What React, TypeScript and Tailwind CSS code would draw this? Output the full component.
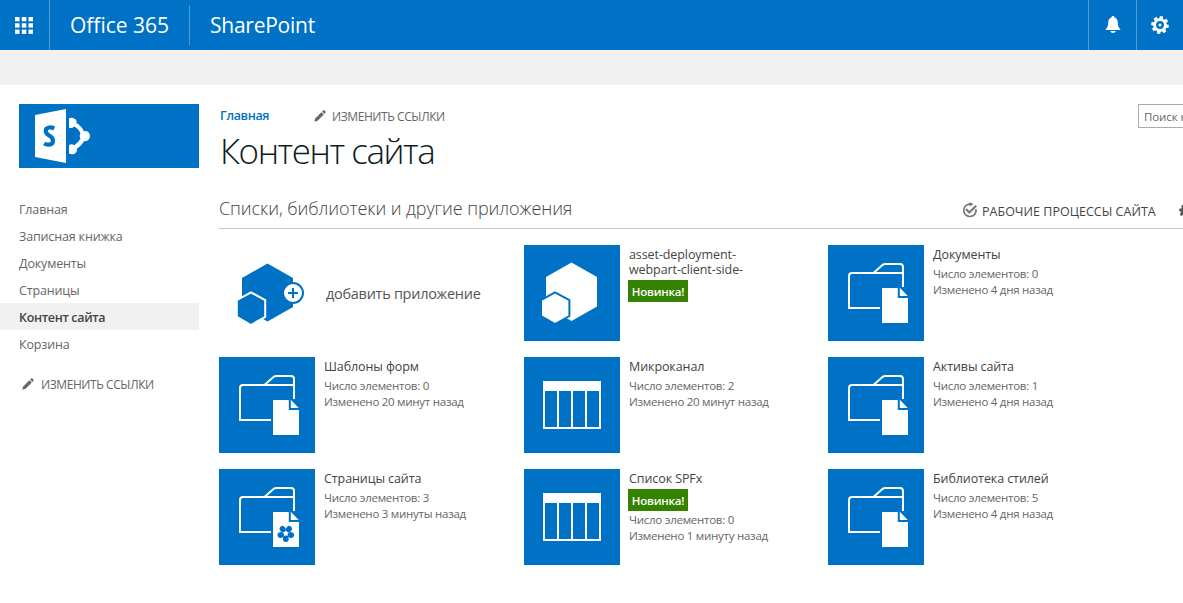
import React from "react";

function Pencil({ className = "" }: { className?: string }) {
  return (
    <svg className={`h-3 w-3 shrink-0 ${className}`} viewBox="0 0 12 12" fill="#666">
      <path d="M0.2 11.8 L1.2 8.4 L7.4 2.2 L9.8 4.6 L3.6 10.8 Z" />
      <path d="M8.1 1.5 L9.2 0.5 Q10 0 10.8 0.7 L11.4 1.3 Q12 2.1 11.4 2.8 L10.5 3.9 Z" />
    </svg>
  );
}

function Gear({ className = "", color }: { className?: string; color: string }) {
  const teeth = [0, 45, 90, 135, 180, 225, 270, 315];
  return (
    <svg className={`shrink-0 ${className}`} viewBox="0 0 18 18">
      <g fill={color}>
        {teeth.map((a) => (
          <path key={a} d="M7 4 L7.4 0.2 H10.6 L11 4 Z" transform={`rotate(${a + 10} 9 9)`} />
        ))}
      </g>
      <circle cx="9" cy="9" r="5.4" fill="none" stroke={color} strokeWidth="2.9" />
      <circle cx="9" cy="9" r="1.5" fill={color} />
    </svg>
  );
}

function Waffle() {
  return (
    <svg className="h-[17px] w-[18px]" viewBox="0 0 18 17" fill="#fff">
      {[0, 6.3, 12.6].map((y) =>
        [0, 6.8, 13.5].map((x) => <rect key={`${x}-${y}`} x={x} y={y} width="4.5" height="4.3" />),
      )}
    </svg>
  );
}

function Bell() {
  return (
    <svg className="h-[18px] w-4" viewBox="0 0 16 18" fill="#fff">
      <path d="M8 0 C9 0 9.5 0.6 9.6 1.5 C12 2.3 12.7 4.2 12.8 6.6 C12.9 10 13.2 11.3 15.3 13.2 V14 H0.7 V13.2 C2.8 11.3 3.1 10 3.2 6.6 C3.3 4.2 4 2.3 6.4 1.5 C6.5 0.6 7 0 8 0 Z" />
      <path d="M5.2 15 H10.8 Q10 17 8 17 Q6 17 5.2 15 Z" />
    </svg>
  );
}

function Logo() {
  return (
    <svg className="h-16 w-[180px]" viewBox="0 0 180 64">
      <rect width="180" height="64" fill="#0072c6" />
      <path d="M16 11 L47 5 V59 L16 53 Z" fill="#fff" />
      <path
        d="M35.2 24.6 Q32.8 23.2 30.2 23.5 Q26.6 24 26.7 27.1 Q26.8 29.3 29.8 31.2 Q34 33.6 34 36.8 Q33.8 40.6 29.3 40.7 Q27 40.7 25.2 39.4"
        fill="none"
        stroke="#0072c6"
        strokeWidth="4.2"
      />
      <path d="M50 14.2 Q54 12.8 56.7 15.6 Q58 17.4 57.6 19.2 Q63 22 64.8 27.2 Q68.5 26.3 70.4 29.4 L71 32 L70.4 34.6 Q68.5 37.7 65.2 37 Q63 41.5 58 44.8 Q58.2 48.5 55.5 49.7 Q53 50.8 50 49.6 V41.2 Q52.5 39.5 55.2 41.2 Q59.5 38.5 61.4 34.8 Q59.8 32 61.4 29.2 Q59.5 24.4 55.3 22.4 Q53 24.8 50 23.8 Z" fill="#fff" />
    </svg>
  );
}

function AddAppIcon() {
  return (
    <svg className="h-24 w-24 shrink-0" viewBox="0 0 96 96">
      <path d="M48.5 18.5 L74 33 V62 L48.5 76.5 L23 62 V33 Z" fill="#0072c6" />
      <path d="M32 47.4 L46.2 55 V71.8 L32 80 L17.8 71.8 V55 Z" fill="#0072c6" stroke="#fff" strokeWidth="2" />
      <circle cx="74" cy="48" r="10" fill="#fff" stroke="#0072c6" strokeWidth="2" />
      <path d="M69 48 H79 M74 43 V53" stroke="#0072c6" strokeWidth="2" />
    </svg>
  );
}

type Kind = "app" | "library" | "pages" | "list";

function TileIcon({ kind }: { kind: Kind }) {
  return (
    <svg className="h-24 w-24 shrink-0" viewBox="0 0 96 96">
      <rect width="96" height="96" fill="#0072c6" />
      {kind === "app" && (
        <>
          <path d="M47.5 17.5 L73 32 V61.5 L47.5 76 L22 61.5 V32 Z" fill="#fff" />
          <path d="M31 47.3 L45.4 55 V71 L31 79.2 L17 71 V55 Z" fill="#fff" stroke="#0072c6" strokeWidth="2" />
        </>
      )}
      {(kind === "library" || kind === "pages") && (
        <>
          <path d="M52 63 H21 V31 Q21 28 24 28 H75 M46 27.5 L55 19.6 Q56 19 57.5 19 H72 Q75 19 75 22 V42" fill="none" stroke="#fff" strokeWidth="2" />
          <path d="M54 43 H72 L80 51.3 V78 H54 Z" fill="#fff" />
          <path d="M70.8 41 V52 H81" fill="none" stroke="#0072c6" strokeWidth="2" />
        </>
      )}
      {kind === "pages" && (
        <g transform="translate(66.8 64.4)" fill="#0072c6">
          {[0, 72, 144, 216, 288].map((a) => (
            <ellipse key={a} transform={`rotate(${a + 36})`} cx="0" cy="-5.3" rx="2.9" ry="3.3" />
          ))}
        </g>
      )}
      {kind === "list" && (
        <>
          <rect x="19" y="24" width="58" height="48" fill="#fff" />
          {[21, 35, 49, 63].map((x) => (
            <rect key={x} x={x} y="34" width="12" height="36" fill="#0072c6" />
          ))}
        </>
      )}
    </svg>
  );
}

interface Item {
  kind: Kind;
  title: string;
  count?: string;
  changed?: string;
  fresh?: boolean;
}

const items: Item[] = [
  { kind: "app", title: "asset-deployment-webpart-client-side-", fresh: true },
  { kind: "library", title: "Документы", count: "0", changed: "4 дня назад" },
  { kind: "library", title: "Шаблоны форм", count: "0", changed: "20 минут назад" },
  { kind: "list", title: "Микроканал", count: "2", changed: "20 минут назад" },
  { kind: "library", title: "Активы сайта", count: "1", changed: "4 дня назад" },
  { kind: "pages", title: "Страницы сайта", count: "3", changed: "3 минуты назад" },
  { kind: "list", title: "Список SPFx", count: "0", changed: "1 минуту назад", fresh: true },
  { kind: "library", title: "Библиотека стилей", count: "5", changed: "4 дня назад" },
];

function Tile({ item }: { item: Item }) {
  return (
    <div className="flex h-24 gap-[9px]">
      <TileIcon kind={item.kind} />
      <div className="flex w-[170px] flex-col items-start pt-0.5 text-[11.5px] leading-4 tracking-[-0.26px] text-[#666]">
        <div className="w-[135px] text-[12.5px] leading-[15px] tracking-[-0.09px] text-[#444]">{item.title}</div>
        {item.fresh && (
          <div className="-ml-px mt-[3px] flex h-[22px] w-[60px] items-center justify-center bg-[#338200] pt-px text-[11.5px] font-semibold tracking-[-0.2px] text-white">
            Новинка!
          </div>
        )}
        {item.count && (
          <div className={item.fresh ? "mt-px whitespace-nowrap" : "mt-1 whitespace-nowrap"}>
            <p>Число элементов: {item.count}</p>
            <p>Изменено {item.changed}</p>
          </div>
        )}
      </div>
    </div>
  );
}

const nav = ["Главная", "Записная книжка", "Документы", "Страницы", "Контент сайта", "Корзина"];

export default function App() {
  return (
    <div className="h-[603px] w-full overflow-hidden bg-white font-['Open_Sans','Noto_Sans',sans-serif] text-[#666]">
      <header className="flex h-[50px] items-center bg-[#0072c6] text-white">
        <div className="flex h-full w-[50px] items-center border-r border-[#4d9cd7] pl-[15px]">
          <Waffle />
        </div>
        <div className="flex h-10 w-[140px] items-center whitespace-nowrap border-r border-[#4d9cd7] pl-5 pt-0.5 text-[21px] tracking-[-0.02px]">Office 365</div>
        <div className="flex-1 pl-5 pt-0.5 text-[21px] tracking-[-0.25px]">SharePoint</div>
        <div className="flex h-full w-12 items-center justify-center border-l border-[#4d9cd7]"><Bell /></div>
        <div className="flex h-full w-[47px] items-center justify-center border-l border-[#4d9cd7]"><Gear className="h-[18px] w-[18px]" color="#fff" /></div>
      </header>
      <div className="h-[35px] bg-[#f1f1f1]" />

      <div className="flex">
        <aside className="w-[219px] shrink-0 pt-[19px]">
          <div className="pl-[19px]"><Logo /></div>
          <nav className="mt-[27px] w-[199px] text-[12.5px] tracking-[-0.15px]">
            {nav.map((label) => (
              <div
                key={label}
                className={
                  label === "Контент сайта"
                    ? "flex h-[27px] items-center bg-[#f1f1f1] pl-[19px] pt-[3px] font-semibold tracking-[-0.34px] text-[#444]"
                    : "flex h-[27px] items-center pl-[19px] pt-[3px]"
                }
              >
                {label}
              </div>
            ))}
          </nav>
          <div className="mt-[17px] flex items-center pl-[22px] text-xs tracking-[-0.42px]">
            <Pencil />
            <span className="ml-[7px] pt-[3px]">ИЗМЕНИТЬ ССЫЛКИ</span>
          </div>
        </aside>

        <main className="min-w-0 flex-1">
          <div className="flex h-[50px] items-start justify-between pt-[19px]">
            <div className="flex h-6 items-center">
              <span className="w-[95px] pl-px text-[12.5px] font-semibold tracking-[-0.36px] text-[#0072c6]">Главная</span>
              <Pencil />
              <span className="ml-1.5 pt-0.5 text-xs tracking-[-0.42px]">ИЗМЕНИТЬ ССЫЛКИ</span>
            </div>
            <div className="h-6 w-[45px] overflow-hidden whitespace-nowrap border border-r-0 border-[#ababab] pl-[5px] text-[11.5px] leading-6 tracking-[-0.1px]">
              Поиск на этом сайте
            </div>
          </div>
          <h1 className="-mt-[7px] h-[46px] pl-px text-[35px] font-light leading-[46px] tracking-[-1.45px] text-[#0c1c22]">Контент сайта</h1>
          <div className="mt-5 flex h-[35px] border-b border-[#c6c6c6]">
            <h2 className="mt-px w-[743px] shrink-0 text-[18px] font-light leading-[26px] tracking-[-0.08px] text-[#444]">Списки, библиотеки и другие приложения</h2>
            <svg className="mt-2 h-4 w-4 shrink-0" viewBox="0 0 16 16" fill="none" stroke="#777">
              <path d="M10.6 2.1 H7.5 A6.2 6.2 0 1 0 14 7.2" strokeWidth="1.7" />
              <path d="M7.3 0 L11 2.3 L7.8 4.4 Z" fill="#777" stroke="none" />
              <path d="M4 7 L7.3 10.4 L14.2 3.7" strokeWidth="2.1" />
            </svg>
            <span className="ml-1 mt-[9px] w-[197px] shrink-0 whitespace-nowrap text-[12.5px] leading-[18px] tracking-[0.02px] text-[#444]">РАБОЧИЕ ПРОЦЕССЫ САЙТА</span>
            <Gear className="mt-2.5 h-3.5 w-3.5" color="#555" />
          </div>
          <div className="mt-4 grid grid-cols-[305px_304px_304px] gap-y-4">
            <div className="flex h-24 items-center">
              <AddAppIcon />
              <span className="ml-[11px] pt-0.5 text-[14.5px] leading-5 tracking-[-0.28px] text-[#555]">добавить приложение</span>
            </div>
            {items.map((item) => (
              <Tile key={item.title} item={item} />
            ))}
          </div>
        </main>
      </div>
    </div>
  );
}
